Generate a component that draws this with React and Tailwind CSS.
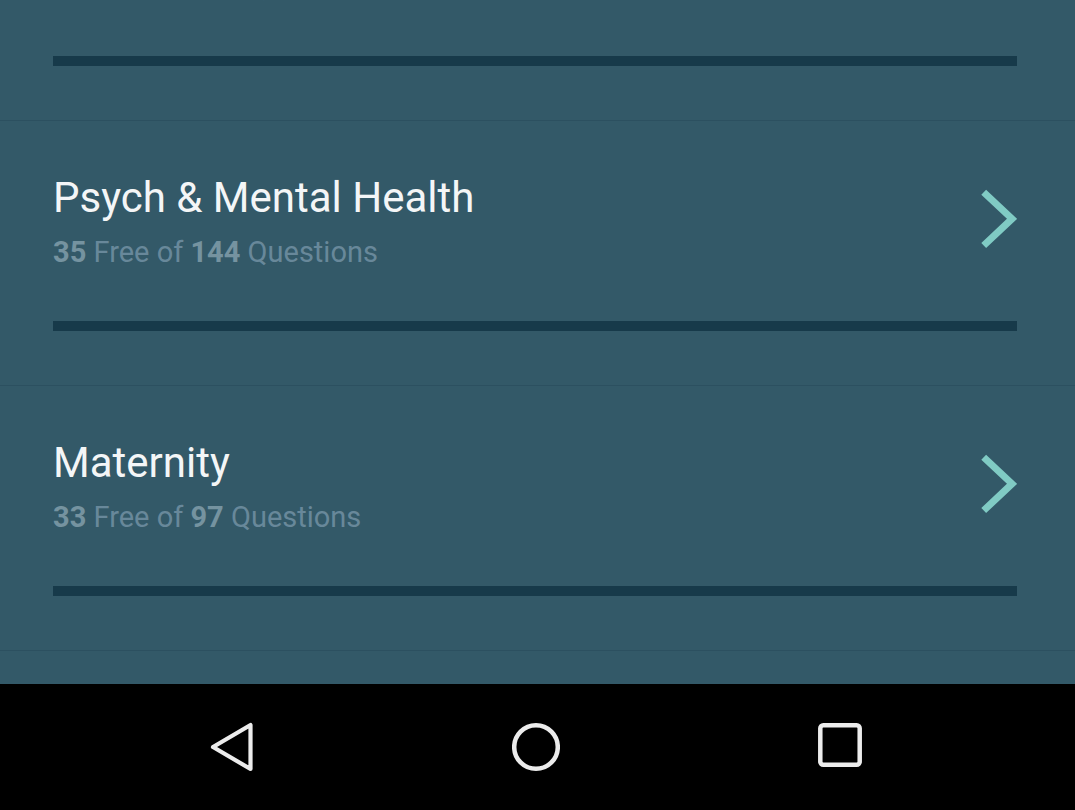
import React from 'react';

const topics = [
  { title: 'Medical-Surgical', free: 48, total: 212 },
  { title: 'Psych & Mental Health', free: 35, total: 144 },
  { title: 'Maternity', free: 33, total: 97 },
  { title: 'Pediatrics', free: 30, total: 88 },
];

const Chevron = () => (
  <svg width="40" height="64" viewBox="0 0 40 64" className="mt-[10px] shrink-0" fill="none">
    <path d="M6.7 5.2 L35 31.8 L6.7 58.5" stroke="#80cbc4" strokeWidth="7" strokeLinejoin="miter" />
  </svg>
);

const TopicRow = ({ topic, first }) => (
  <div
    className={`pl-[53px] pr-[58px] pt-[56px] pb-[54px] border-b border-[#2c5060] ${first ? '-mt-[144px]' : ''}`}
  >
    <div className="flex items-start justify-between">
      <div className="flex flex-col">
        <span className="text-[42px] leading-[42px] text-[#f4f6f7]">{topic.title}</span>
        <span className="mt-[19px] text-[29px] leading-[29px] text-[#68889a]">
          <span className="font-bold text-[#7593a0]">{topic.free}</span> Free of{' '}
          <span className="font-bold text-[#7593a0]">{topic.total}</span> Questions
        </span>
      </div>
      <Chevron />
    </div>
    <div className="mt-[54px] h-[10px] bg-[#173a4a]" />
  </div>
);

const NavBar = () => (
  <nav className="h-[126px] shrink-0 bg-black flex items-center justify-center gap-[256px] pr-[4px]">
    {/* back */}
    <svg width="48" height="52" viewBox="0 0 48 52" fill="none">
      <path d="M42.5 4 L42.5 48 L5 26 Z" stroke="#ececec" strokeWidth="4.2" strokeLinejoin="round" />
    </svg>
    {/* home */}
    <svg width="48" height="52" viewBox="0 0 48 52" fill="none">
      <circle cx="24" cy="26" r="21.8" stroke="#ececec" strokeWidth="4.5" />
    </svg>
    {/* recents */}
    <svg width="48" height="52" viewBox="0 0 48 52" fill="none">
      <rect x="4.3" y="4.3" width="39.4" height="39.4" rx="3" stroke="#ececec" strokeWidth="4.5" />
    </svg>
  </nav>
);

export default function App() {
  return (
    <div className="w-[1075px] h-[810px] flex flex-col overflow-hidden bg-[#335968] font-['Roboto',_'Liberation_Sans',_sans-serif]">
      <main className="flex-1 overflow-hidden">
        {topics.map((t, i) => (
          <TopicRow key={t.title} topic={t} first={i === 0} />
        ))}
      </main>
      <NavBar />
    </div>
  );
}
